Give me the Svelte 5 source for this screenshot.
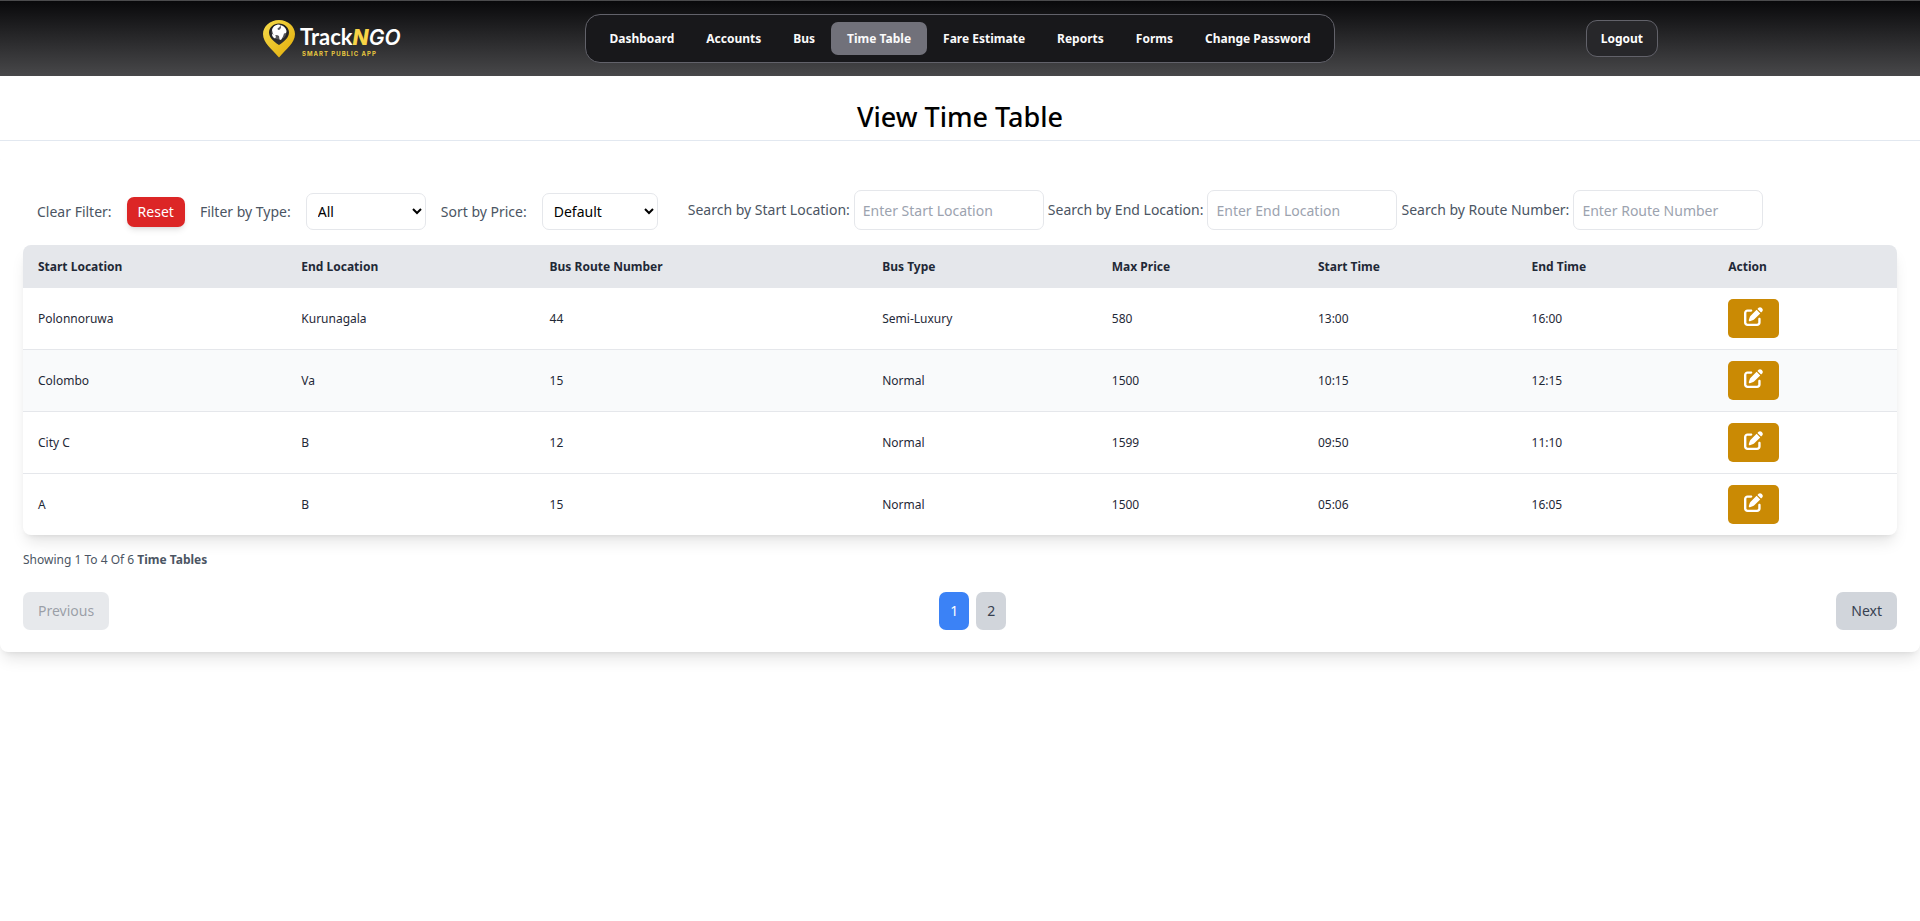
<script>
  const navItems = ['Dashboard', 'Accounts', 'Bus', 'Time Table', 'Fare Estimate', 'Reports', 'Forms', 'Change Password'];
  const columns = [
    ['Start Location', 14.05],
    ['End Location', 13.25],
    ['Bus Route Number', 17.75],
    ['Bus Type', 12.25],
    ['Max Price', 11],
    ['Start Time', 11.4],
    ['End Time', 10.5],
    ['Action', 9.8]
  ];
  const rows = [
    ['Polonnoruwa', 'Kurunagala', '44', 'Semi-Luxury', '580', '13:00', '16:00'],
    ['Colombo', 'Va', '15', 'Normal', '1500', '10:15', '12:15'],
    ['City C', 'B', '12', 'Normal', '1599', '09:50', '11:10'],
    ['A', 'B', '15', 'Normal', '1500', '05:06', '16:05']
  ];
  let active = $state('Time Table');
  let highlighted = $state(1);
  let page = $state(1);
</script>

<header>
  <div class="bar">
    <a class="logo" href="#home" aria-label="TrackNGO Smart Public App">
      <svg width="142" height="38" viewBox="0 0 142 38">
        <defs>
          <linearGradient id="pin" x1="0" y1="0" x2="1" y2="1">
            <stop offset="0" stop-color="#f6dc4c" />
            <stop offset="1" stop-color="#e0ab08" />
          </linearGradient>
        </defs>
        <g transform="translate(1 0)">
          <path fill="url(#pin)" fill-rule="evenodd" d="M16 0C7 0 0 6.500 0 14c0 9 9 15 16 23.500C23 29 32 23 32 14 32 6.500 25 0 16 0zM16 3.500c5.500 0 10 4 10 9 0 5-4.500 9-10 12.500-5.500-3.500-10-7.500-10-12.500 0-5 4.500-9 10-9z" />
          <circle cx="16" cy="12" r="7.500" fill="#56565a" />
          <path fill="#fff" d="M9 10c.5-3 3-5 6-5.500l2.500.5-1 2-2 1.500.5 1.500 2-.5 1-2-.5-2c3 0 5.500 2.500 6 5.500l-.5 2-2 .5-1 3-2 3.500-1.500-.5-.5-3.500-2-1-2.500.5-1.500-1.500-.5-2z" />
          <path fill="#fff" d="M9 14l3 1 1 2-1 1.500C10 17.500 9 16 9 14z" />
        </g>
        <text y="25"><tspan class="track" x="38">Track</tspan><tspan class="n">N</tspan><tspan class="go">GO</tspan></text>
        <text class="tagline" x="40" y="36">SMART PUBLIC APP</text>
      </svg>
    </a>
    <nav>
      {#each navItems as item}
        <button class:active={item === active} onclick={() => (active = item)}>{item}</button>
      {/each}
    </nav>
    <button class="logout">Logout</button>
  </div>
</header>

<main>
  <h1>View Time Table</h1>

  <section class="card">
    <div class="filters">
      <div class="group">
        <label for="reset">Clear Filter:</label>
        <button class="reset" id="reset">Reset</button>
        <label for="type">Filter by Type:</label>
        <select id="type" class="type"><option>All</option><option>Normal</option><option>Semi-Luxury</option></select>
        <label for="price">Sort by Price:</label>
        <select id="price"><option>Default</option><option>Low to High</option><option>High to Low</option></select>
      </div>
      <div class="search">
        <label for="start">Search by Start Location:</label>
        <input id="start" type="text" placeholder="Enter Start Location" />
        <label for="end">Search by End Location:</label>
        <input id="end" type="text" placeholder="Enter End Location" />
        <label for="route">Search by Route Number:</label>
        <input id="route" type="text" placeholder="Enter Route Number" />
      </div>
    </div>

    <div class="table-wrap">
      <table>
        <colgroup>
          {#each columns as [, width]}
            <col style="width: {width}%" />
          {/each}
        </colgroup>
        <thead>
          <tr>
            {#each columns as [name]}
              <th>{name}</th>
            {/each}
          </tr>
        </thead>
        <tbody>
          {#each rows as row, i}
            <tr class:highlighted={i === highlighted} onmouseenter={() => (highlighted = i)}>
              {#each row as cell}<td>{cell}</td>{/each}
              <td>
                <button class="edit" aria-label="Edit">
                  <svg width="19" height="19" viewBox="0 0 512 512" fill="currentColor"><path d="M471.6 21.7c-21.9-21.9-57.3-21.9-79.2 0L362.3 51.7l97.9 97.9 30.1-30.1c21.900-21.900 21.900-57.300 0-79.200L471.600 21.700zm-299.200 220c-6.100 6.100-10.800 13.600-13.500 21.900l-29.600 88.800c-2.900 8.600-.6 18.100 5.800 24.600s15.900 8.700 24.600 5.800l88.800-29.600c8.200-2.700 15.700-7.400 21.900-13.500L437.700 172.300 339.700 74.300 172.400 241.700zM96 64C43 64 0 107 0 160V416c0 53 43 96 96 96H352c53 0 96-43 96-96V320c0-17.700-14.300-32-32-32s-32 14.300-32 32v96c0 17.700-14.300 32-32 32H96c-17.700 0-32-14.300-32-32V160c0-17.700 14.300-32 32-32h96c17.700 0 32-14.300 32-32s-14.300-32-32-32H96z" /></svg>
                </button>
              </td>
            </tr>
          {/each}
        </tbody>
      </table>
    </div>

    <p class="summary">Showing 1 To 4 Of 6 <strong>Time Tables</strong></p>

    <div class="pager">
      <button disabled={page === 1} onclick={() => (page = 1)}>Previous</button>
      <div class="pages">
        {#each [1, 2] as n}
          <button class:current={n === page} onclick={() => (page = n)}>{n}</button>
        {/each}
      </div>
      <button disabled={page === 2} onclick={() => (page = 2)}>Next</button>
    </div>
  </section>
</main>

<style>
  :global(body) {
    background: #fff;
    font-family: 'Segoe UI', 'Noto Sans', 'Open Sans', sans-serif;
    font-size: 14px;
    line-height: 22px;
  }
  button, input, select {
    box-sizing: border-box;
    margin: 0;
    border: 0;
    font: inherit;
    color: inherit;
  }
  button { cursor: pointer; }

  header {
    box-sizing: border-box;
    padding: 13px 24px;
    border-top: 1px solid #4b4b4d;
    background: linear-gradient(#09090b, #48484a);
  }
  .bar {
    display: grid;
    grid-template-columns: 1fr auto 1fr;
    align-items: center;
    max-width: 1396px;
    margin: 0 auto;
  }
  .logo, .logo svg { display: block; }
  .track { fill: #fff; font: 700 22px 'Lato', sans-serif; }
  .n { fill: #f8d447; font: italic 800 21px 'Inter', sans-serif; }
  .go { fill: #fff; font: italic 600 21px 'Inter', sans-serif; }
  .tagline { fill: #e9c83f; font: 700 6px 'Inter', sans-serif; letter-spacing: 1px; }
  nav {
    display: flex;
    padding: 7px;
    border: 1px solid #62626a;
    border-radius: 15px;
    background: #18181b;
  }
  nav button {
    padding: 6px 16px;
    border-radius: 7px;
    background: none;
    color: #fafafa;
    font-size: 12px;
    font-weight: 700;
    line-height: 21px;
  }
  nav .active { background: #71717a; }
  .logout {
    justify-self: end;
    padding: 8px 14px;
    border: 1px solid #62626a;
    border-radius: 11px;
    background: #27272a;
    color: #fff;
    font-size: 12px;
    font-weight: 700;
    line-height: 19px;
  }

  h1 {
    margin: 0;
    padding: 23px 0 5px;
    border-bottom: 1px solid #e2e8f0;
    text-align: center;
    font-size: 27px;
    font-weight: 500;
    line-height: 36px;
  }
  main { padding-bottom: 32px; }
  .card {
    margin-top: 14px;
    padding: 35px 23px 22px;
    border-radius: 8px;
    background: #fff;
    box-shadow: 0 10px 15px -3px rgb(0 0 0 / 0.1), 0 4px 6px -4px rgb(0 0 0 / 0.1);
  }
  .filters {
    display: flex;
    flex-wrap: wrap;
    align-items: flex-end;
    gap: 8px 30px;
    padding: 0 14px 15px;
    color: #4b5563;
  }
  .group { display: flex; align-items: center; gap: 15px; }
  .search { display: flex; align-items: center; gap: 4px; }
  .reset {
    padding: 4px 11px;
    border-radius: 7px;
    background: #dc2626;
    color: #fff;
    box-shadow: 0 4px 6px -1px rgb(0 0 0 / 0.1), 0 2px 4px -2px rgb(0 0 0 / 0.1);
  }
  select {
    width: 116px;
    height: 37px;
    padding: 0 7px;
    border: 1px solid #e5e7eb;
    border-radius: 7px;
    background: #fff;
    color: #000;
  }
  .type { width: 120px; }
  input {
    width: 190px;
    height: 40px;
    padding: 0 8px;
    border: 1px solid #e5e7eb;
    border-radius: 7px;
    background: #fff;
  }
  input::placeholder { color: #9ca3af; }

  .table-wrap {
    overflow: hidden;
    border-radius: 8px;
    box-shadow: 0 10px 15px -3px rgb(0 0 0 / 0.1), 0 4px 6px -4px rgb(0 0 0 / 0.1);
  }
  table {
    width: 100%;
    border-collapse: collapse;
    table-layout: fixed;
    color: #1f2937;
    font-size: 12px;
    line-height: 19px;
    text-align: left;
  }
  th { padding: 12px 15px; background: #e5e7eb; font-weight: 700; }
  td { padding: 11px 15px; }
  tbody tr + tr { border-top: 1px solid #e5e7eb; }
  .highlighted { background: #f9fafb; }
  .edit {
    display: block;
    padding: 8px 16px 12px;
    border-radius: 5px;
    background: #ca8a04;
    color: #fff;
  }
  .edit svg { display: block; }

  .summary {
    margin: 15px 0 22px;
    color: #4b5563;
    font-size: 12px;
    line-height: 20px;
  }
  .pager { display: flex; justify-content: space-between; }
  .pager button {
    padding: 8px 15px;
    border-radius: 7px;
    background: #d1d5db;
    color: #374151;
  }
  .pager button:disabled { opacity: 0.5; cursor: default; }
  .pages { display: flex; gap: 7px; }
  .pager .pages button { padding: 8px 11px; }
  .pager .pages .current { background: #3b82f6; color: #fff; }
</style>
